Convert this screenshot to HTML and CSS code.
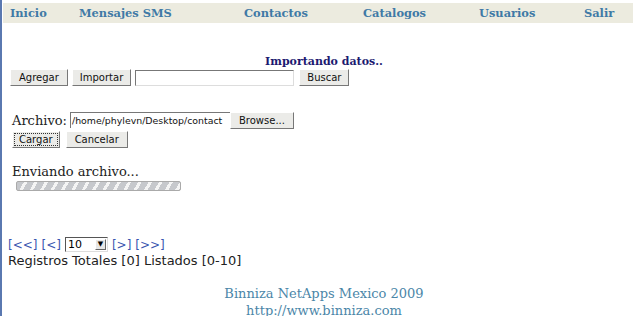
FILE: index.html
```html
<!DOCTYPE html>
<html lang="es">
<head>
    <meta charset="UTF-8">
    <title>Binniza NetApps - Importar</title>
    <link rel="stylesheet" href="styles.css">
</head>
<body>
    <div class="page">
        <div class="menu">
            <a href="#" class="menu-link">Inicio</a>
            <a href="#" class="menu-link">Mensajes SMS</a>
            <a href="#" class="menu-link">Contactos</a>
            <a href="#" class="menu-link">Catalogos</a>
            <a href="#" class="menu-link">Usuarios</a>
            <a href="#" class="menu-link">Salir</a>
        </div>

        <h1 class="title">Importando datos..</h1>

        <div class="toolbar">
            <button class="btn">Agregar</button>
            <button class="btn btn-narrow">Importar</button>
            <input type="text" class="search-box">
            <button class="btn btn-search">Buscar</button>
        </div>

        <div class="upload">
            <div class="file-row">
                <span class="label">Archivo:</span>
                <span class="file-box">/home/phylevn/Desktop/contact</span>
                <button class="btn">Browse...</button>
            </div>
            <div class="upload-actions">
                <button class="btn btn-focus">Cargar</button>
                <button class="btn">Cancelar</button>
            </div>
            <p class="status">Enviando archivo...</p>
            <div class="progress"></div>
        </div>

        <div class="pager">
            <div class="pager-nav">
                <a href="#" class="pager-link">[&lt;&lt;]</a>
                <a href="#" class="pager-link">[&lt;]</a>
                <span class="select-box">10<span class="select-arrow">&#9660;</span></span>
                <a href="#" class="pager-link">[&gt;]</a>
                <a href="#" class="pager-link">[&gt;&gt;]</a>
            </div>
            <div class="totals">Registros Totales [0] Listados [0-10]</div>
        </div>

        <div class="footer">
            <div>Binniza NetApps Mexico 2009</div>
            <div>http://www.binniza.com</div>
        </div>
    </div>
</body>
</html>
```

FILE: styles.css
```css
html, body { margin: 0; padding: 0; background: #fff; }
body { border-left: 2px solid #5a78b0; min-height: 316px; box-sizing: border-box; overflow: hidden; }
.page { padding: 3px 7px 0 1px; font-family: 'DejaVu Sans', sans-serif; }

/* menu superior */
.menu { display: grid; grid-template-columns: 69px 165px 119px 116px 105px 1fr; height: 20px; align-items: center; background: #ecebdf; padding-left: 7px; }
.menu-link { font-family: 'DejaVu Serif', serif; font-weight: bold; font-size: 11.4px; color: #3f7aa6; text-decoration: none; }

.title { margin: 31px 0 0; text-align: center; font-family: 'DejaVu Serif', serif; font-size: 11px; font-weight: bold; color: #1c1a70; height: 15px; line-height: 15px; padding-left: 12px; }

/* botones */
.btn { font-family: 'DejaVu Sans', sans-serif; font-size: 10px; color: #111; background: #ebebe8; border: 1px solid; border-color: #fff #777 #777 #fff; padding: 1px 8px; height: 17px; line-height: 13px; margin: 0; }
.btn-narrow { padding: 1px 7px; }
.btn-focus { outline: 1px dotted #333; outline-offset: -3px; padding: 1px 6px; }

.toolbar { display: flex; align-items: flex-end; gap: 4px; padding-left: 7px; height: 17px; }
.search-box { width: 159px; height: 16px; border: 1px solid; border-color: #777 #ddd #ddd #777; padding: 0; margin: 0 1px 0 0; box-sizing: border-box; }
.btn-search { padding: 1px 7px; }

.upload { padding-left: 9px; margin-top: 24px; }
.file-row { display: flex; align-items: center; height: 20px; }
.label { font-family: 'DejaVu Serif', serif; font-size: 13px; color: #222; margin-right: 3px; }
.file-box { font-size: 9.4px; color: #111; width: 160px; height: 16px; line-height: 16px; border-top: 1px solid #777; border-left: 1px solid #777; padding-left: 1px; overflow: hidden; white-space: nowrap; box-sizing: border-box; }
.upload-actions { display: flex; gap: 6px; margin-top: 1px; }
.status { margin: 16px 0 0; font-family: 'DejaVu Serif', serif; font-size: 13px; color: #222; height: 16px; line-height: 16px; }
.progress { margin: 1px 0 0 4px; width: 165px; height: 10px; border: 1px solid #aaa; border-radius: 2px; background: repeating-linear-gradient(120deg, #c6c8cc 0 6px, #f4f4f4 6px 9px); box-sizing: border-box; }

/* paginador */
.pager { margin-top: 46px; padding-left: 5px; }
.pager-nav { display: flex; align-items: center; gap: 4px; height: 15px; }
.pager-link { font-size: 12px; color: #3a56b0; text-decoration: none; }
.select-box { display: inline-flex; align-items: center; justify-content: space-between; width: 39px; height: 13px; border: 1px solid; border-color: #555 #ddd #ddd #555; font-size: 11px; padding-left: 2px; box-sizing: content-box; }
.select-arrow { font-size: 7px; border: 1px solid; border-color: #fff #666 #666 #fff; background: #e6e6e6; width: 9px; height: 9px; line-height: 9px; text-align: center; margin-right: 1px; }
.totals { font-size: 13px; color: #222; margin-top: 1px; }

.footer { margin-top: 17px; text-align: center; font-family: 'DejaVu Serif', serif; font-size: 13px; color: #4b86a8; line-height: 17px; padding-left: 12px; }
```
